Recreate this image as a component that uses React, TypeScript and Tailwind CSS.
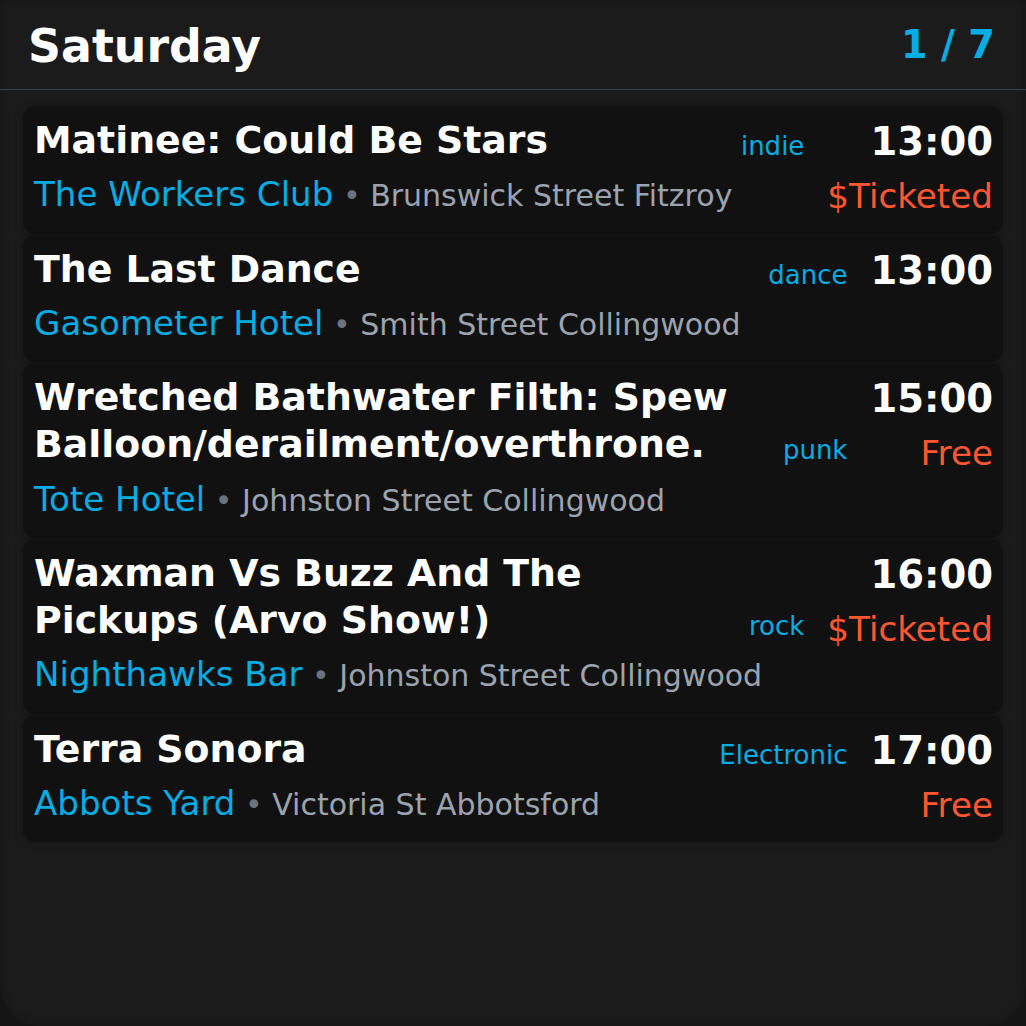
import React from "react";

type Ev = {
  title: string;
  venue: string;
  address: string;
  tag: string;
  time: string;
  price?: string;
};

const events: Ev[] = [
  { title: "Matinee: Could Be Stars", venue: "The Workers Club", address: "Brunswick Street Fitzroy", tag: "indie", time: "13:00", price: "$Ticketed" },
  { title: "The Last Dance", venue: "Gasometer Hotel", address: "Smith Street Collingwood", tag: "dance", time: "13:00" },
  { title: "Wretched Bathwater Filth: Spew Balloon/derailment/overthrone.", venue: "Tote Hotel", address: "Johnston Street Collingwood", tag: "punk", time: "15:00", price: "Free" },
  { title: "Waxman Vs Buzz And The Pickups (Arvo Show!)", venue: "Nighthawks Bar", address: "Johnston Street Collingwood", tag: "rock", time: "16:00", price: "$Ticketed" },
  { title: "Terra Sonora", venue: "Abbots Yard", address: "Victoria St Abbotsford", tag: "Electronic", time: "17:00", price: "Free" },
];

function Card({ e }: { e: Ev }) {
  return (
    <div className="flex items-start gap-[23px] rounded-[13px] bg-[#111111] pl-[11px] pr-[10px] pt-[11px] pb-[17px] shadow-[0_0_10px_rgba(0,0,0,0.22)]">
      <div className="flex min-w-0 flex-1 flex-col">
        <div className="flex gap-3 [align-items:last_baseline]">
          <div className="min-w-0 flex-1 text-[37.8px] font-bold leading-[1.25] text-white">{e.title}</div>
          <div className="relative top-[2px] shrink-0 text-[26px] leading-[1.3] text-[#05ade2]">{e.tag}</div>
        </div>
        <div className="mt-[8px] whitespace-nowrap leading-[1.3]">
          <span className="text-[34.1px] text-[#05ade2]">{e.venue}</span>
          <span className="text-[30px] text-[#6b7280]"> • </span>
          <span className="text-[30px] text-[#9ca3af]">{e.address}</span>
        </div>
      </div>
      <div className="flex shrink-0 flex-col items-end">
        <div className="pt-[1px] text-[38.5px] font-bold leading-[1.25] text-white">{e.time}</div>
        {e.price && (
          <div className="mt-[13px] text-[34.2px] leading-none text-[#ff5733]">{e.price}</div>
        )}
      </div>
    </div>
  );
}

export default function App() {
  return (
    <div className="h-[1026px] w-[1026px] bg-[#151515]" style={{ fontFamily: '"DejaVu Sans", sans-serif' }}>
      <div className="flex h-full w-full flex-col rounded-b-[40px] bg-[#1b1b1b] shadow-[inset_0_0_10px_rgba(0,0,0,0.25)]">
        <div className="flex h-[90px] items-center justify-between border-b border-[#374151] pl-[28px] pr-[31px]">
          <div className="mt-1 text-[45.8px] font-bold leading-[1.3] text-white">Saturday</div>
          <div className="text-[38.3px] font-bold leading-[1.3] text-[#05ade2]">1 / 7</div>
        </div>
        <div className="flex flex-col gap-[1px] px-[23px] pt-[16px]">
          {events.map((e, i) => (
            <Card key={i} e={e} />
          ))}
        </div>
      </div>
    </div>
  );
}
